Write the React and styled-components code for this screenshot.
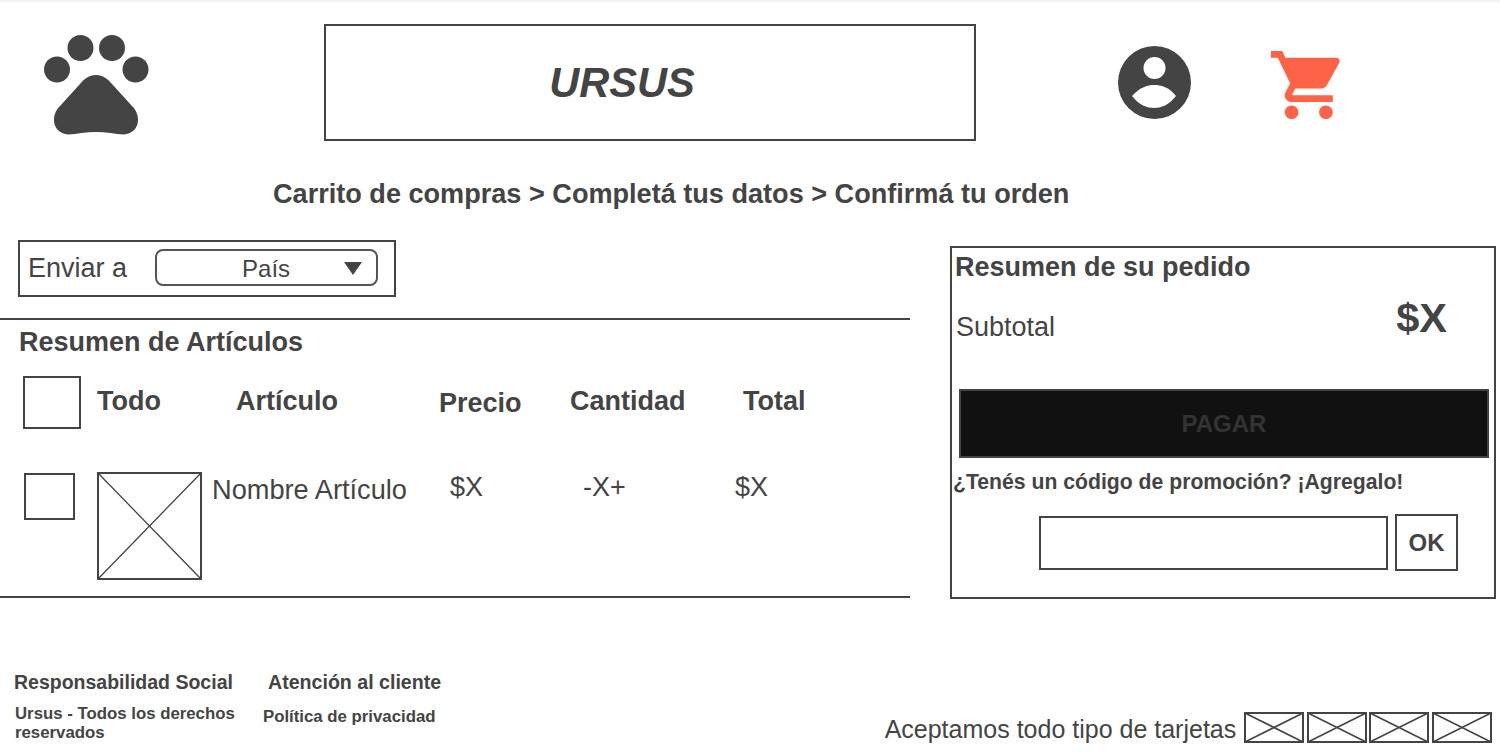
import React from 'react';
import styled, { createGlobalStyle } from 'styled-components';

const ink = '#444444';

const GlobalStyle = createGlobalStyle`
  html, body {
    margin: 0;
    padding: 0;
    background: #fff;
  }
  body {
    font-family: "Liberation Sans", Arial, sans-serif;
    color: ${ink};
  }
`
const Page = styled.div`
  width: 1500px;
  height: 756px;
  overflow: hidden;
  display: flex;
  flex-direction: column;
  background: linear-gradient(#f1f1f1, #fff 4px);
`
const Header = styled.header`
  display: flex;
  align-items: center;
  padding-top: 24px;
`
const Logo = styled.svg`
  width: 105px;
  height: 101px;
  margin: 6px 175px 0 44px;
`
const TitleBox = styled.div`
  box-sizing: border-box;
  width: 652px;
  height: 117px;
  padding-right: 56px;
  border: 2px solid ${ink};
  display: flex;
  align-items: center;
  justify-content: center;
  font-size: 41.6px;
  font-weight: bold;
  font-style: italic;
`
const UserIcon = styled.svg`
  width: 74px;
  height: 74px;
  margin-left: 141px;
`
const CartIcon = styled.svg`
  width: 69px;
  height: 68px;
  margin: 5px 0 0 80px;
`
const Breadcrumb = styled.div`
  margin: 37px 0 30px 273px;
  font-size: 27.1px;
  line-height: 32px;
  font-weight: bold;
`
const Main = styled.main`
  display: flex;
  align-items: flex-start;
`
const LeftColumn = styled.section`
  width: 910px;
`
const ShipBox = styled.div`
  box-sizing: border-box;
  width: 378px;
  height: 57px;
  margin-left: 18px;
  padding-left: 8px;
  border: 2px solid ${ink};
  display: flex;
  align-items: center;
  font-size: 27px;
`
const Select = styled.div`
  box-sizing: border-box;
  width: 223px;
  height: 37px;
  margin: -2px 0 0 28px;
  padding-right: 14px;
  border: 2px solid #555;
  border-radius: 8px;
  display: flex;
  align-items: center;
  justify-content: space-between;
  font-size: 24px;
`
const SelectLabel = styled.span`
  margin: 2px 0 0 85px;
`
const SelectArrow = styled.span`
  width: 0;
  height: 0;
  margin-top: 1px;
  border-left: 9px solid transparent;
  border-right: 9px solid transparent;
  border-top: 13px solid ${ink};
`
const Articles = styled.div`
  box-sizing: border-box;
  height: 280px;
  margin-top: 21px;
  border-top: 2px solid ${ink};
  border-bottom: 2px solid ${ink};
`
const SectionTitle = styled.h2`
  margin: 6px 0 0 19px;
  font-size: 27px;
  line-height: 32px;
  font-weight: bold;
`
const HeadRow = styled.div`
  display: grid;
  grid-template-columns: 74px 139px 203px 131px 173px 1fr;
  align-items: center;
  margin: 18px 0 0 23px;
`
const HeadCell = styled.div`
  font-size: 27px;
  font-weight: bold;
  line-height: 32px;
  margin-top: ${(props) => props.$drop}px;
`
const CheckAll = styled.div`
  box-sizing: border-box;
  width: 58px;
  height: 53px;
  border: 2px solid ${ink};
`
const ItemRow = styled.div`
  display: grid;
  grid-template-columns: 73px 115px 238px 133px 152px 1fr;
  align-items: start;
  margin: 43px 0 0 24px;
`
const CheckItem = styled.div`
  box-sizing: border-box;
  width: 51px;
  height: 47px;
  margin-top: 1px;
  border: 2px solid ${ink};
`
const Placeholder = styled.svg`
  display: block;
  width: ${(props) => props.$w}px;
  height: ${(props) => props.$h}px;
`
const ItemCell = styled.div`
  font-size: ${(props) => props.$size || 27}px;
  line-height: 32px;
  margin-top: ${(props) => props.$top}px;
`
const Summary = styled.aside`
  box-sizing: border-box;
  width: 546px;
  height: 353px;
  margin: 6px 0 0 40px;
  padding: 3px 6px 0 3px;
  border: 2px solid ${ink};
`
const SummaryTitle = styled.h2`
  margin: 0;
  font-size: 27px;
  line-height: 32px;
  font-weight: bold;
`
const SubtotalRow = styled.div`
  display: flex;
  justify-content: space-between;
  align-items: flex-start;
  padding: 0 41px 0 1px;
  margin-top: 12px;
`
const SubtotalLabel = styled.span`
  margin-top: 16px;
  font-size: 27px;
  line-height: 32px;
`
const SubtotalValue = styled.span`
  font-size: 41.5px;
  line-height: 46px;
  font-weight: bold;
`
const PayButton = styled.button`
  box-sizing: border-box;
  display: block;
  width: 530px;
  height: 69px;
  margin: 46px 0 0 4px;
  border: 2px solid ${ink};
  background: #111111;
  color: #333333;
  font-family: inherit;
  font-size: 24px;
  font-weight: bold;
`
const PromoText = styled.p`
  margin: 11px 0 0 -2px;
  font-size: 21.2px;
  line-height: 26px;
  font-weight: bold;
`
const PromoRow = styled.div`
  display: flex;
  align-items: center;
  margin: 19px 0 0 84px;
  gap: 7px;
`
const PromoInput = styled.div`
  box-sizing: border-box;
  width: 349px;
  height: 54px;
  border: 2px solid ${ink};
`
const OkButton = styled.button`
  box-sizing: border-box;
  width: 63px;
  height: 57px;
  padding: 0;
  border: 2px solid ${ink};
  background: #fff;
  color: ${ink};
  font-family: inherit;
  font-size: 24px;
  font-weight: bold;
`
const Footer = styled.footer`
  display: flex;
  align-items: flex-start;
  margin-top: 71px;
`
const FooterColumn = styled.div`
  width: ${(props) => props.$w}px;
  margin-left: ${(props) => props.$left}px;
`
const FooterTitle = styled.div`
  margin-left: ${(props) => props.$indent || 0}px;
  font-size: ${(props) => props.$size}px;
  line-height: 24px;
  font-weight: bold;
`
const FooterText = styled.div`
  margin: ${(props) => props.$top}px 0 0 1px;
  font-size: 16.8px;
  line-height: 19px;
  font-weight: bold;
`
const Cards = styled.div`
  display: flex;
  align-items: center;
  gap: 2.7px;
  margin: 41px 0 0 auto;
  padding-right: 8px;
  font-size: 25px;
`
const CardsLabel = styled.span`
  margin: 4px 5px 0 0;
`

function CrossBox({ w, h }) {
  return (
    <Placeholder $w={w} $h={h} viewBox={`0 0 ${w} ${h}`}>
      <rect x="1" y="1" width={w - 2} height={h - 2} fill="none" stroke={ink} strokeWidth="2" />
      <path d={`M1 1L${w - 1} ${h - 1}M${w - 1} 1L1 ${h - 1}`} stroke={ink} strokeWidth={h < 50 ? 1.6 : 1.3} fill="none" />
    </Placeholder>
  );
}

function App() {
  return (
    <Page>
      <GlobalStyle />
      <Header>
        <Logo viewBox="44 35 105 101">
          <g fill={ink}>
            <circle cx="80.5" cy="48" r="13" />
            <circle cx="112" cy="48" r="13" />
            <circle cx="57" cy="69.5" r="13" />
            <circle cx="135.5" cy="69.5" r="13" />
            <path d="M96 75C103 75 108 79 112 84L132 106C137 111 138 116 138 120C138 129 131 134 124 134.5C115 134 106 132 96 132C86 132 77 134 68 134.5C61 134 54 129 54 120C54 116 55 111 60 106L80 84C84 79 89 75 96 75Z" />
          </g>
        </Logo>
        <TitleBox>URSUS</TitleBox>
        <UserIcon viewBox="1117 46 74 74">
          <circle cx="1154.5" cy="82.5" r="36.5" fill={ink} />
          <circle cx="1154.5" cy="68" r="11" fill="#fff" />
          <path d="M1132 96C1140 87 1148 85 1154 85C1161 85 1169 87 1176 96C1169 105 1161 108 1154 108C1147 108 1139 105 1132 96Z" fill="#fff" />
        </UserIcon>
        <CartIcon viewBox="1 2 20.1 20" preserveAspectRatio="none">
          <path
            fill="#ff6347"
            d="M7 18c-1.1 0-1.99.9-1.99 2S5.9 22 7 22s2-.9 2-2-.9-2-2-2zM1 2v2h2l3.6 7.59-1.35 2.45c-.16.28-.25.61-.25.96 0 1.1.9 2 2 2h12v-2H7.42c-.14 0-.25-.11-.25-.25l.03-.12.9-1.63h7.45c.75 0 1.41-.41 1.75-1.03l3.58-6.49c.08-.14.12-.31.12-.48 0-.55-.45-1-1-1H5.21l-.94-2H1zm16 16c-1.1 0-1.99.9-1.99 2s.89 2 1.99 2 2-.9 2-2-.9-2-2-2z"
          />
        </CartIcon>
      </Header>
      <Breadcrumb>Carrito de compras &gt; Completá tus datos &gt; Confirmá tu orden</Breadcrumb>
      <Main>
        <LeftColumn>
          <ShipBox>
            Enviar a
            <Select>
              <SelectLabel>País</SelectLabel>
              <SelectArrow />
            </Select>
          </ShipBox>
          <Articles>
            <SectionTitle>Resumen de Artículos</SectionTitle>
            <HeadRow>
              <CheckAll />
              <HeadCell $drop={-4}>Todo</HeadCell>
              <HeadCell $drop={-4}>Artículo</HeadCell>
              <HeadCell $drop={0}>Precio</HeadCell>
              <HeadCell $drop={-4}>Cantidad</HeadCell>
              <HeadCell $drop={-4}>Total</HeadCell>
            </HeadRow>
            <ItemRow>
              <CheckItem />
              <CrossBox w={105} h={108} />
              <ItemCell $top={2} $size={27.2}>Nombre Artículo</ItemCell>
              <ItemCell $top={-1}>$X</ItemCell>
              <ItemCell $top={-1}>-X+</ItemCell>
              <ItemCell $top={-1}>$X</ItemCell>
            </ItemRow>
          </Articles>
        </LeftColumn>
        <Summary>
          <SummaryTitle>Resumen de su pedido</SummaryTitle>
          <SubtotalRow>
            <SubtotalLabel>Subtotal</SubtotalLabel>
            <SubtotalValue>$X</SubtotalValue>
          </SubtotalRow>
          <PayButton>PAGAR</PayButton>
          <PromoText>¿Tenés un código de promoción? ¡Agregalo!</PromoText>
          <PromoRow>
            <PromoInput />
            <OkButton>OK</OkButton>
          </PromoRow>
        </Summary>
      </Main>
      <Footer>
        <FooterColumn $w={240} $left={14}>
          <FooterTitle $size={19.5}>Responsabilidad Social</FooterTitle>
          <FooterText $top={10}>Ursus - Todos los derechos reservados</FooterText>
        </FooterColumn>
        <FooterColumn $w={200} $left={8}>
          <FooterTitle $indent={6} $size={19.6}>Atención al cliente</FooterTitle>
          <FooterText $top={13}>Política de privacidad</FooterText>
        </FooterColumn>
        <Cards>
          <CardsLabel>Aceptamos todo tipo de tarjetas</CardsLabel>
          <CrossBox w={60} h={31} />
          <CrossBox w={60} h={31} />
          <CrossBox w={60} h={31} />
          <CrossBox w={60} h={31} />
        </Cards>
      </Footer>
    </Page>
  );
}

export default App;
